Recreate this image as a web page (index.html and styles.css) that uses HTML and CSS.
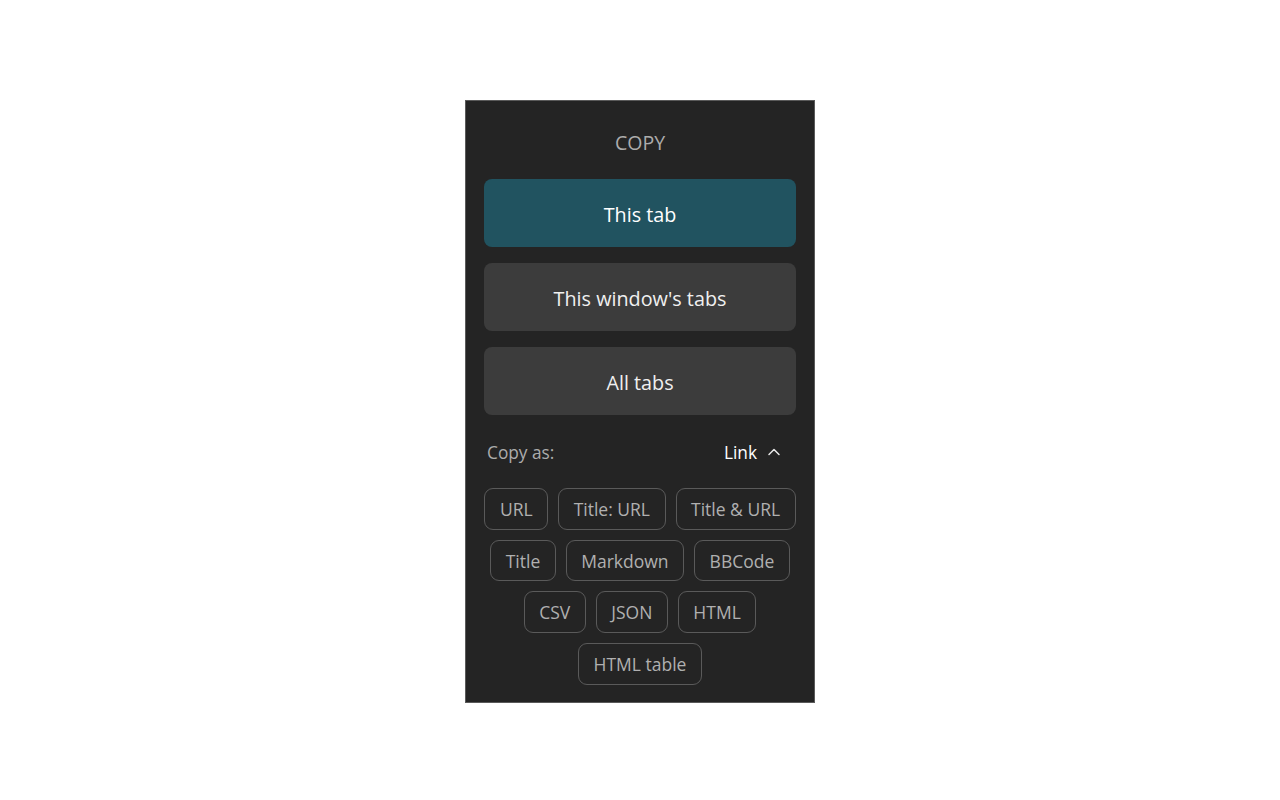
FILE: index.html
```html
<!DOCTYPE html>
<html lang="en">
<head>
<meta charset="utf-8">
<title>Copy tabs</title>
<link rel="stylesheet" href="styles.css">
</head>
<body>
<div class="stage">
  <div class="panel">
    <div class="heading">COPY</div>
    <div class="actions">
      <button class="action primary">This tab</button>
      <button class="action">This window's tabs</button>
      <button class="action">All tabs</button>
    </div>
    <div class="format-row">
      <span class="format-label">Copy as:</span>
      <span class="format-value">Link
        <svg class="chevron" width="14" height="10" viewBox="0 0 14 10"><path d="M2 7.5 L7 2.5 L12 7.5" fill="none" stroke="#e8e8e8" stroke-width="1.5" stroke-linecap="round" stroke-linejoin="round"/></svg>
      </span>
    </div>
    <div class="chips">
      <div class="chip-row">
        <span class="chip">URL</span>
        <span class="chip">Title: URL</span>
        <span class="chip">Title &amp; URL</span>
      </div>
      <div class="chip-row">
        <span class="chip">Title</span>
        <span class="chip">Markdown</span>
        <span class="chip">BBCode</span>
      </div>
      <div class="chip-row">
        <span class="chip">CSV</span>
        <span class="chip">JSON</span>
        <span class="chip">HTML</span>
      </div>
      <div class="chip-row">
        <span class="chip">HTML table</span>
      </div>
    </div>
  </div>
</div>
</body>
</html>
```
FILE: styles.css
```css
html, body {
  margin: 0;
  padding: 0;
  background: #ffffff;
}
body {
  font-family: "Open Sans", "Noto Sans", "Liberation Sans", sans-serif;
}
.stage {
  display: flex;
  justify-content: center;
  padding-top: 100px;
}
.panel {
  width: 312px;
  padding: 18px 18px 17px;
  background: #242424;
  border: 1px solid #5a5a5a;
}
.heading {
  text-align: center;
  color: #acacac;
  font-size: 19.5px;
  line-height: 24px;
  padding: 12px 0;
  margin-bottom: 12px;
}
.actions {
  display: flex;
  flex-direction: column;
  gap: 16px;
}
.action {
  height: 68px;
  border: none;
  border-radius: 8px;
  background: #3c3c3c;
  color: #f0f0f0;
  font-family: inherit;
  font-size: 19.8px;
  padding: 3px 0 0;
}
.action.primary {
  background: #215360;
  color: #ffffff;
}
.format-row {
  display: flex;
  align-items: center;
  justify-content: space-between;
  height: 42px;
  margin-top: 16px;
  margin-bottom: 15px;
  padding: 0 15px 0 3px;
  font-size: 17.3px;
}
.format-label {
  color: #acacac;
}
.format-value {
  display: flex;
  align-items: center;
  gap: 10px;
  color: #ffffff;
}
.chips {
  display: flex;
  flex-direction: column;
  gap: 10px;
}
.chip-row {
  display: flex;
  justify-content: center;
  gap: 10px;
}
.chip {
  display: inline-flex;
  align-items: center;
  white-space: nowrap;
  height: 39.7px;
  padding: 0 14.5px;
  border: 1px solid #5a5a5a;
  border-radius: 9px;
  color: #b0b0b0;
  font-size: 17.5px;
}
```
